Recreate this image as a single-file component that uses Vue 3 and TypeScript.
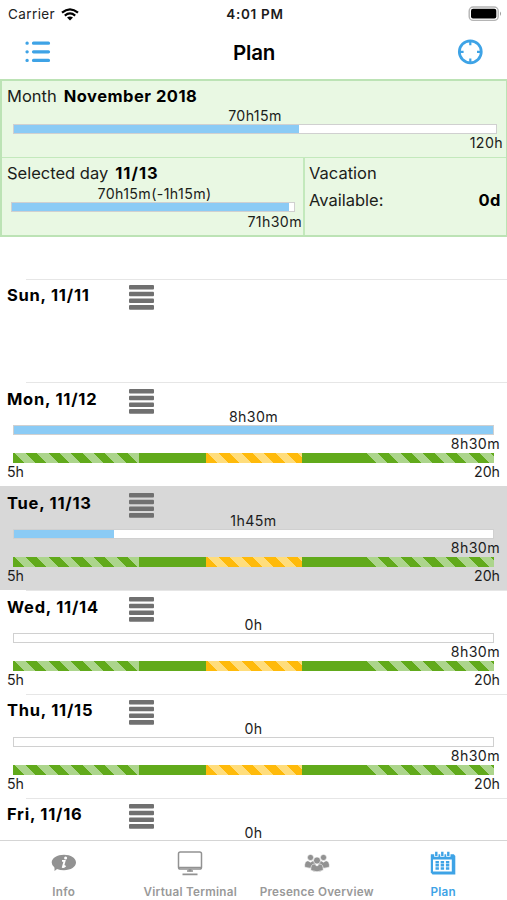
<script setup lang="ts">
interface Day {
  name: string
  planned?: string
  target?: string
  percent?: number
  selected?: boolean
}

const days: Day[] = [
  { name: 'Sun, 11/11' },
  { name: 'Mon, 11/12', planned: '8h30m', target: '8h30m', percent: 100 },
  { name: 'Tue, 11/13', planned: '1h45m', target: '8h30m', percent: 20.8, selected: true },
  { name: 'Wed, 11/14', planned: '0h', target: '8h30m', percent: 0 },
  { name: 'Thu, 11/15', planned: '0h', target: '8h30m', percent: 0 },
  { name: 'Fri, 11/16', planned: '0h' },
]
</script>

<template>
  <div class="screen">
    <header class="status">
      <div class="carrier">
        <span>Carrier</span>
        <svg width="18" height="13" viewBox="0 0 18 13" fill="none" stroke="#000" stroke-width="2.2">
          <path d="M1 4.7Q9-2 17 4.7M3.8 7.6Q9 3.3 14.2 7.6" />
          <path d="M6 9.6Q9 7.2 12 9.6L9 12.6Z" fill="#000" stroke="none" />
        </svg>
      </div>
      <span class="clock">4:01 PM</span>
      <svg class="battery" width="34" height="16" viewBox="0 0 34 16">
        <rect x="1.2" y="1" width="29" height="13.4" rx="4" fill="#fff" stroke="#b4b4b4" stroke-width="1.4" />
        <rect x="3" y="2.8" width="25.3" height="9.8" rx="2" fill="#000" />
        <path d="M32 5.5Q34 7.7 32 10Z" fill="#999" />
      </svg>
    </header>

    <nav class="nav">
      <svg width="26" height="22" viewBox="0 0 26 22" fill="none" stroke="#3ea3e6" stroke-width="3.2" stroke-linecap="round">
        <path d="M2 2.2h.2M2 10.800h.2M2 19.400h.2M8.500 2.200H23.500M8.500 10.800H23.500M8.500 19.400H23.500" />
      </svg>
      <h1>Plan</h1>
      <svg width="26" height="26" viewBox="0 0 26 26" fill="none" stroke="#3ea3e6">
        <circle cx="13.300" cy="12.800" r="11" stroke-width="2.7" />
        <path d="M13.300 2v4.300M13.300 19.500V24M2 12.800h4.600M20 12.800H24" stroke-width="2.2" />
      </svg>
    </nav>

    <section class="summary">
      <div class="month">
        <p class="heading"><span>Month</span><b>November 2018</b></p>
        <p class="value">70h15m</p>
        <div class="bar"><i :style="{ width: '59.1%' }"></i></div>
        <p class="total">120h</p>
      </div>
      <div class="lower">
        <div class="selected">
          <p class="heading"><span>Selected day</span><b class="date">11/13</b></p>
          <p class="value">70h15m(-1h15m)</p>
          <div class="bar"><i :style="{ width: '98.3%' }"></i></div>
          <p class="total">71h30m</p>
        </div>
        <div class="vacation">
          <p>Vacation</p>
          <p class="available"><span>Available:</span><b>0d</b></p>
        </div>
      </div>
    </section>

    <main class="days">
      <article v-for="day in days" :key="day.name" class="day" :class="{ active: day.selected }">
        <div class="title">
          <b>{{ day.name }}</b>
          <svg width="25" height="25" viewBox="0 0 25 25" fill="#707070">
            <rect width="25" height="4.6" rx="1" />
            <rect y="6.7" width="25" height="4.6" rx="1" />
            <rect y="13.4" width="25" height="4.6" rx="1" />
            <rect y="20.1" width="25" height="4.6" rx="1" />
          </svg>
        </div>
        <p v-if="day.planned" class="value">{{ day.planned }}</p>
        <template v-if="day.target">
          <div class="bar"><i :style="{ width: day.percent + '%' }"></i></div>
          <p class="total">{{ day.target }}</p>
          <div class="timeline">
            <span class="flex start"></span>
            <span class="core"></span>
            <span class="pause"></span>
            <span class="core"></span>
            <span class="flex end"></span>
          </div>
          <p class="hours"><span>5h</span><span>20h</span></p>
        </template>
      </article>
    </main>

    <footer class="tabs">
      <div class="tab">
        <svg width="26" height="26" viewBox="0 0 26 26">
          <path d="M13 4.8C19.8 4.8 25 8.1 25 12.5S19.8 20.2 13 20.2Q9 20.2 6 18.9Q4.7 20.4 3.2 20.7Q4 19.2 3.3 17.2Q.7 15.3.7 12.500C.7 8.100 6.200 4.800 13 4.800Z" fill="#929292" />
          <circle cx="14.6" cy="7.9" r="1.5" fill="#fff" />
          <path d="M11 10.9H13.6L11.9 17Q13 17.4 14.5 15.7" fill="none" stroke="#fff" stroke-width="1.9" />
        </svg>
        <span>Info</span>
      </div>
      <div class="tab">
        <svg width="26" height="26" viewBox="0 0 26 26">
          <rect x="1.5" y="2" width="23" height="17" rx="1.8" fill="#fff" stroke="#929292" stroke-width="1.5" />
          <path d="M1.5 17.5H24.5M10 21H16M5.5 24.3H20.5" stroke="#929292" stroke-width="1.7" />
          <path d="M11.5 19h3v2.500h-3z" fill="#929292" />
        </svg>
        <span>Virtual Terminal</span>
      </div>
      <div class="tab">
        <svg width="26" height="26" viewBox="0 0 26 26" fill="#929292" stroke="#fff" stroke-width=".6">
          <circle cx="6.500" cy="7.500" r="3.100" />
          <circle cx="19.500" cy="7.500" r="3.100" />
          <path d="M.5 17Q.5 10.700 4 10.700L6.500 12.200L9 10.700Q12 11 12 17Q6 19.500.5 17Z" />
          <path d="M25.500 17Q25.500 10.700 22 10.700L19.500 12.200L17 10.700Q14 11 14 17Q20 19.500 25.500 17Z" />
          <circle cx="13" cy="10.500" r="3.500" />
          <path d="M6.700 20.300Q6.700 14 10.200 14L13 16L15.800 14Q19.300 14 19.300 20.300Q13 23.300 6.700 20.300Z" />
        </svg>
        <span>Presence Overview</span>
      </div>
      <div class="tab current">
        <svg width="26" height="26" viewBox="0 0 26 26">
          <path d="M.8 4.200H23.800L25.300 6V24.500H2.500L.8 22.500Z" fill="#3ea3e6" />
          <path d="M3 9.500H21.800V21.500H3Z" fill="#fff" />
          <path d="M4.200 2.800h4.300v3.900H4.200zM10.200 2.800h4.300v3.900h-4.300zM16.200 2.800h4.300v3.900h-4.300z" fill="#fff" />
          <path d="M6.300 1.800v4.300M12.300 1.800v4.300M18.300 1.800v4.300" stroke="#3ea3e6" stroke-width="2.400" />
          <path d="M7.200 11V20M12.400 11V20M17.600 11V20" stroke="#3ea3e6" stroke-width="3.400" stroke-dasharray="2.500 .6" />
        </svg>
        <span>Plan</span>
      </div>
    </footer>
  </div>
</template>

<style>
body {
  background: #fff;
}
</style>

<style scoped>
* {
  box-sizing: border-box;
}
.screen {
  width: 507px;
  height: 900px;
  overflow: hidden;
  display: flex;
  flex-direction: column;
  background: #fff;
  color: #1c1c1c;
  font-family: Inter, sans-serif;
}
p, h1 {
  margin: 0;
}
svg {
  display: block;
  flex: none;
}
.status {
  height: 28px;
  display: grid;
  grid-template-columns: 1fr auto 1fr;
  align-items: center;
  padding: 0 5px 0 8px;
  font-size: 13.5px;
}
.carrier {
  display: flex;
  align-items: center;
  gap: 6px;
  color: #222;
  letter-spacing: .4px;
}
.clock {
  font-size: 13.5px;
  font-weight: 600;
  letter-spacing: .7px;
}
.battery {
  justify-self: end;
}
.nav {
  height: 51px;
  padding: 0 24px 3px 25px;
  display: flex;
  justify-content: space-between;
  align-items: center;
}
h1 {
  font-size: 20.5px;
  font-weight: 600;
  letter-spacing: -.2px;
  color: #000;
}
.summary {
  height: 158px;
  border: 2px solid #bce3b5;
  border-right-width: 1px;
  background: #e9f8e3;
  color: #1b211a;
  display: flex;
  flex-direction: column;
}
.month {
  height: 77px;
  border-bottom: 1.5px solid #c3e9bc;
  padding: 3px 3px 0 5px;
}
.heading {
  display: flex;
  gap: 7px;
  height: 23px;
  line-height: 24px;
  font-size: 16.5px;
}
.heading b, .available b {
  color: #000;
  font-weight: 700;
  letter-spacing: .5px;
}
.heading .date {
  letter-spacing: 1px;
}
.value {
  text-align: center;
  font-size: 14.2px;
  height: 17px;
  line-height: 17px;
  letter-spacing: .38px;
}
.total {
  text-align: right;
  font-size: 14.2px;
  height: 18px;
  line-height: 18px;
  letter-spacing: .38px;
}
.bar {
  height: 10px;
  margin: 0 6px;
  border: 1px solid #d0d0d0;
  background: #fff;
}
.bar i {
  display: block;
  height: 100%;
  background: #8bcbf5;
}
.month .bar {
  margin: 0 6px;
}
.lower {
  flex: 1;
  display: flex;
}
.selected {
  width: 303px;
  border-right: 2px solid #c3e9bc;
  padding: 4px 1px 0 5px;
}
.selected .heading {
  line-height: 23px;
}
.selected .bar {
  margin: 0 7px 0 4px;
}
.selected .total {
  height: 20px;
  line-height: 20px;
}
.vacation {
  flex: 1;
  padding: 2px 5px 0 4px;
  font-size: 16.5px;
  line-height: 27px;
}
.available {
  display: flex;
  justify-content: space-between;
}
.days {
  flex: 1;
  min-height: 0;
  padding-top: 41.5px;
}
.day {
  height: 103.85px;
  padding: 5px 7px 0;
  background: linear-gradient(#e6e6e6, #e6e6e6) 26px 0 / 100% 1px no-repeat;
}
.day:last-child {
  height: 42px;
}
.day.active {
  background: #d8d8d8;
}
.title {
  height: 21px;
  display: grid;
  grid-template-columns: 122px 25px;
  padding-top: 1.5px;
}
.title b {
  font-size: 16.5px;
  line-height: 21px;
  letter-spacing: .75px;
  color: #000;
}
.day .value {
  height: 17px;
  line-height: 18px;
}
.timeline {
  display: flex;
  height: 10px;
  margin: 0 6px;
}
.core {
  background: #61aa1b;
  width: 67px;
}
.core ~ .core {
  width: 63px;
}
.flex {
  background: repeating-linear-gradient(45deg, #61aa1b 0 8px, #acd58c 8px 16px);
}
.start {
  width: 126px;
}
.end {
  flex: 1;
}
.pause {
  width: 96px;
  background: repeating-linear-gradient(45deg, #ffba0a 0 8px, #ffdd7c 8px 16px);
}
.hours {
  display: flex;
  justify-content: space-between;
  font-size: 14.2px;
  line-height: 18px;
}
.tabs {
  height: 60px;
  flex: none;
  border-top: 1px solid #d5d5d5;
  display: grid;
  grid-template-columns: repeat(4, 126.5px);
  background: #fff;
  padding: 9px 0 0 .5px;
}
.tab {
  display: flex;
  flex-direction: column;
  align-items: center;
  gap: 9px;
  font-size: 11.7px;
  font-weight: 600;
  line-height: 15px;
  letter-spacing: .26px;
  color: #999;
  white-space: nowrap;
}
.current {
  color: #3ea3e6;
}
</style>
